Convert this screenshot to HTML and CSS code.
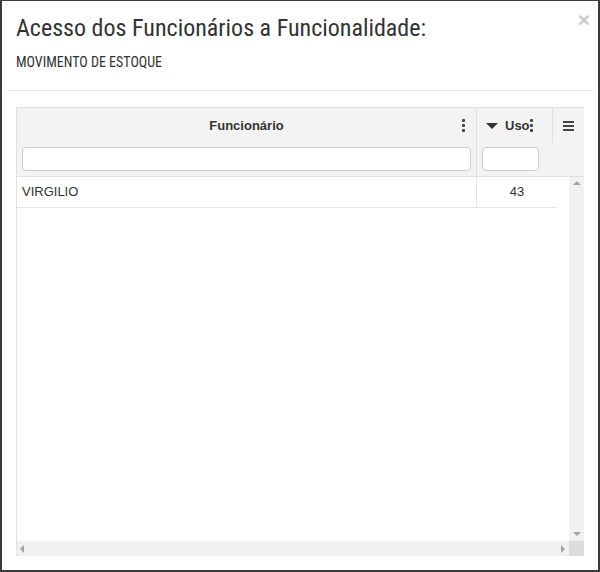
FILE: index.html
```html
<!DOCTYPE html>
<html lang="pt">
<head>
<meta charset="utf-8">
<link rel="stylesheet" href="styles.css">
</head>
<body>
<div class="modal">
  <div class="modal-header">
    <h1 class="title">Acesso dos Funcionários a Funcionalidade:</h1>
    <span class="close">×</span>
    <p class="subtitle">MOVIMENTO DE ESTOQUE</p>
  </div>
  <div class="divider"></div>
  <div class="grid">
    <div class="grid-header">
      <div class="hcell hcell-name">
        <div class="htitle">
          <span class="hlabel">Funcionário</span>
          <span class="dots"><i></i><i></i><i></i></span>
        </div>
        <div class="hfilter"><input class="filter filter-name" type="text"></div>
      </div>
      <div class="hright">
        <div class="htop">
          <div class="htitle htitle-uso">
            <span class="sort"></span>
            <span class="hlabel">Uso</span>
            <span class="dots dots-uso"><i></i><i></i><i></i></span>
          </div>
          <div class="menu"><i></i><i></i><i></i></div>
        </div>
        <div class="hfilter hfilter-uso"><input class="filter filter-uso" type="text"></div>
      </div>
    </div>
    <div class="grid-body">
      <div class="viewport">
        <div class="rows">
          <div class="row">
            <div class="cell cell-name">VIRGILIO</div>
            <div class="cell cell-uso">43</div>
          </div>
        </div>
        <div class="vscroll">
          <span class="arrow arrow-up"></span>
          <span class="arrow arrow-down"></span>
        </div>
      </div>
      <div class="hscroll-row">
        <div class="hscroll">
          <span class="arrow arrow-left"></span>
          <span class="arrow arrow-right"></span>
        </div>
        <div class="corner"></div>
      </div>
    </div>
  </div>
</div>
</body>
</html>
```
FILE: styles.css
```css
* { box-sizing: border-box; }
html, body { margin: 0; padding: 0; }
body {
  background: #3c3c3c;
  width: 600px;
  height: 572px;
  padding: 1px 2px 2px 2px;
  font-family: "Liberation Sans", Arial, sans-serif;
}
.modal {
  background: #fff;
  height: 569px;
  display: flex;
  flex-direction: column;
}
.modal-header {
  position: relative;
  padding: 12px 14px 0 14px;
  height: 89px;
}
.title {
  margin: 0;
  font-family: Roboto, "Noto Sans", sans-serif;
  font-stretch: condensed;
  font-weight: 400;
  font-size: 24px;
  line-height: 30px;
  color: #333;
}
.close {
  position: absolute;
  right: 8px;
  top: 9px;
  font-family: "Liberation Sans", Arial, sans-serif;
  font-size: 21px;
  font-weight: 700;
  color: #c8c8c8;
  line-height: 20px;
}
.subtitle {
  margin: 10px 0 0 0;
  font-family: Roboto, "Noto Sans", sans-serif;
  font-stretch: condensed;
  font-size: 14px;
  line-height: 18px;
  color: #333;
}
.divider {
  height: 1px;
  background: #e8e8e8;
  margin: 0 4px;
}
.grid {
  margin: 16px 14px 0 14px;
  border-top: 1px solid #e0e0e0;
  border-left: 1px solid #e0e0e0;
  height: 449px;
  display: flex;
  flex-direction: column;
}
.grid-header {
  display: flex;
  background: #f3f3f3;
  border-bottom: 1px solid #e0e0e0;
  height: 69px;
}
.hcell-name {
  width: 460px;
  border-right: 1px solid #e0e0e0;
  display: flex;
  flex-direction: column;
}
.htitle {
  height: 35px;
  display: flex;
  align-items: center;
  justify-content: center;
  position: relative;
}
.hlabel {
  font-size: 13px;
  font-weight: 700;
  color: #333;
}
.dots {
  position: absolute;
  right: 11px;
  top: 11px;
  display: flex;
  flex-direction: column;
  gap: 2px;
}
.dots i {
  display: block;
  width: 3px;
  height: 3px;
  border-radius: 1px;
  background: #444;
}
.hfilter {
  padding: 4px 5px 0 5px;
}
.filter {
  display: block;
  width: 449px;
  height: 24px;
  border: 1px solid #ccc;
  border-radius: 4px;
  background: #fff;
  margin: 0;
  padding: 0;
}
.hright {
  flex: 1;
  display: flex;
  flex-direction: column;
}
.htop {
  display: flex;
  height: 35px;
}
.htitle-uso {
  width: 76px;
  border-right: 1px solid #e0e0e0;
  justify-content: flex-start;
  padding-left: 9px;
}
.sort {
  width: 0;
  height: 0;
  border-left: 6px solid transparent;
  border-right: 6px solid transparent;
  border-top: 6px solid #333;
  margin-right: 7px;
}
.dots-uso {
  right: 19px;
}
.menu {
  flex: 1;
  display: flex;
  flex-direction: column;
  align-items: center;
  padding-top: 13px;
  gap: 2px;
}
.menu i {
  display: block;
  width: 11px;
  height: 2px;
  background: #444;
}
.hfilter-uso {
  padding-left: 5px;
}
.filter-uso {
  width: 57px;
}
.grid-body {
  flex: 1;
  display: flex;
  flex-direction: column;
}
.viewport {
  flex: 1;
  display: flex;
}
.rows {
  flex: 1;
}
.row {
  display: flex;
  width: 540px;
  height: 31px;
  border-bottom: 1px solid #e5e5e5;
}
.cell {
  font-size: 13px;
  color: #333;
  line-height: 30px;
}
.cell-name {
  width: 460px;
  border-right: 1px solid #e5e5e5;
  padding-left: 5px;
}
.cell-uso {
  flex: 1;
  text-align: center;
}
.vscroll {
  width: 15px;
  background: #f1f1f1;
  position: relative;
}
.hscroll-row {
  height: 15px;
  display: flex;
}
.hscroll {
  flex: 1;
  background: #f1f1f1;
  position: relative;
}
.corner {
  width: 15px;
  background: #dcdcdc;
}
.arrow {
  position: absolute;
  width: 0;
  height: 0;
}
.arrow-up {
  left: 4px;
  top: 4px;
  border-left: 4px solid transparent;
  border-right: 4px solid transparent;
  border-bottom: 4px solid #a3a3a3;
}
.arrow-down {
  left: 4px;
  bottom: 5px;
  border-left: 4px solid transparent;
  border-right: 4px solid transparent;
  border-top: 4px solid #a3a3a3;
}
.arrow-left {
  left: 3px;
  top: 4px;
  border-top: 4px solid transparent;
  border-bottom: 4px solid transparent;
  border-right: 4px solid #a3a3a3;
}
.arrow-right {
  right: 4px;
  top: 4px;
  border-top: 4px solid transparent;
  border-bottom: 4px solid transparent;
  border-left: 4px solid #a3a3a3;
}
```
